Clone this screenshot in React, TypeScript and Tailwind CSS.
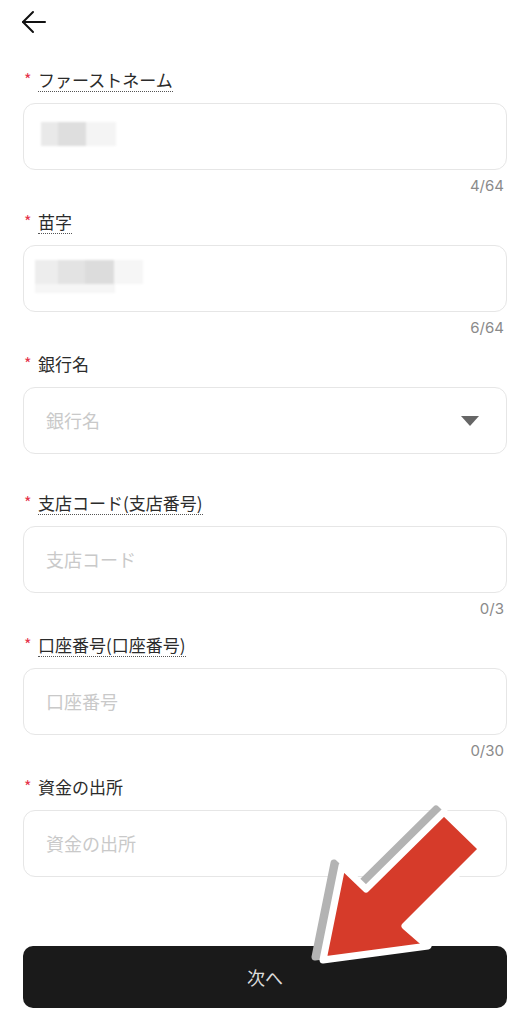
import React from 'react';

const font = { fontFamily: '"Noto Sans CJK JP", "Noto Sans", sans-serif' };
const latin = { fontFamily: 'Inter, "Noto Sans CJK JP", sans-serif' };

interface FieldProps {
  label: string;
  dotted?: boolean;
  counter?: string;
  placeholder?: string;
  select?: boolean;
  children?: React.ReactNode;
}

const Field: React.FC<FieldProps> = ({ label, dotted, counter, placeholder, select, children }) => (
  <div className={counter ? 'mb-[14px]' : 'mb-[37px]'}>
    <div className="flex items-center h-[24px] mb-[11px]">
      <span className="text-[#e5334b] text-[16px] leading-none w-[15px] pl-[1px] -mt-[3px]">*</span>
      <span
        className={`text-[17px] leading-[22px] text-[#2b2b2b] ${dotted ? 'border-b-[1.5px] border-dotted border-[#555]' : ''}`}
      >
        {label}
      </span>
    </div>
    <div className="h-[67px] rounded-[12px] border border-[#e6e6e6] bg-white flex items-center relative">
      {placeholder && <span className="pl-[22px] text-[18px] text-[#c9c9c9]">{placeholder}</span>}
      {children}
      {select && (
        <svg className="absolute right-[27px] top-[28px]" width="18" height="10" viewBox="0 0 18 10">
          <path d="M0 0 H18 L9 10 Z" fill="#666" />
        </svg>
      )}
    </div>
    {counter && (
      <div className="mt-[6px] h-[20px] text-right text-[15px] leading-[20px] text-[#8a8a8a] pr-[3px]" style={latin}>
        {counter}
      </div>
    )}
  </div>
);

export default function App() {
  return (
    <div className="relative w-full min-h-[1024px] bg-white overflow-hidden" style={font}>
      <div className="h-[44px] flex items-center pl-[21px]">
        <svg width="26" height="24" viewBox="0 0 26 24" fill="none" stroke="#111" strokeWidth="2" strokeLinecap="round" strokeLinejoin="round">
          <path d="M24 12 H2" />
          <path d="M12 2 L2 12 L12 22" />
        </svg>
      </div>

      <div className="px-[23px] mt-[24px]">
        <Field label="ファーストネーム" dotted counter="4/64">
          <div className="flex ml-[17px] -mt-[6px] blur-[1px]">
            <div className="w-[17px] h-[24px] bg-[#e9e9e9]" />
            <div className="w-[28px] h-[24px] bg-[#dedede]" />
            <div className="w-[30px] h-[24px] bg-[#f4f4f4]" />
          </div>
        </Field>
        <Field label="苗字" dotted counter="6/64">
          <div className="flex flex-col ml-[11px] -mt-[4px] blur-[1px]">
            <div className="flex">
              <div className="w-[23px] h-[24px] bg-[#ededed]" />
              <div className="w-[27px] h-[24px] bg-[#e3e3e3]" />
              <div className="w-[29px] h-[24px] bg-[#dcdcdc]" />
              <div className="w-[29px] h-[24px] bg-[#f6f6f6]" />
            </div>
            <div className="w-[80px] h-[9px] bg-[#f6f6f6]" />
          </div>
        </Field>
        <Field label="銀行名" placeholder="銀行名" select />
        <Field label="支店コード(支店番号)" dotted counter="0/3" placeholder="支店コード" />
        <Field label="口座番号(口座番号)" dotted counter="0/30" placeholder="口座番号" />
        <Field label="資金の出所" placeholder="資金の出所" />

        <button className="mt-[69px] w-full h-[62px] rounded-[10px] bg-[#1a1a1a] text-[#dcdcdc] text-[18px] flex items-center justify-center">
          次へ
        </button>
      </div>

      <svg className="absolute left-0 top-0 pointer-events-none" width="530" height="1024" viewBox="0 0 530 1024">
        <g transform="translate(-8 -3)">
          <polygon
            points="323,960 342,866 366,889 444,812 482,849 405,926 428,946"
            fill="#b3b3b3"
            stroke="#b3b3b3"
            strokeWidth="7"
            strokeLinejoin="round"
          />
        </g>
        <polygon
          points="323,960 342,866 366,889 444,812 482,849 405,926 428,946"
          fill="#d63b2a"
          stroke="#ffffff"
          strokeWidth="7"
          strokeLinejoin="round"
        />
      </svg>
    </div>
  );
}
